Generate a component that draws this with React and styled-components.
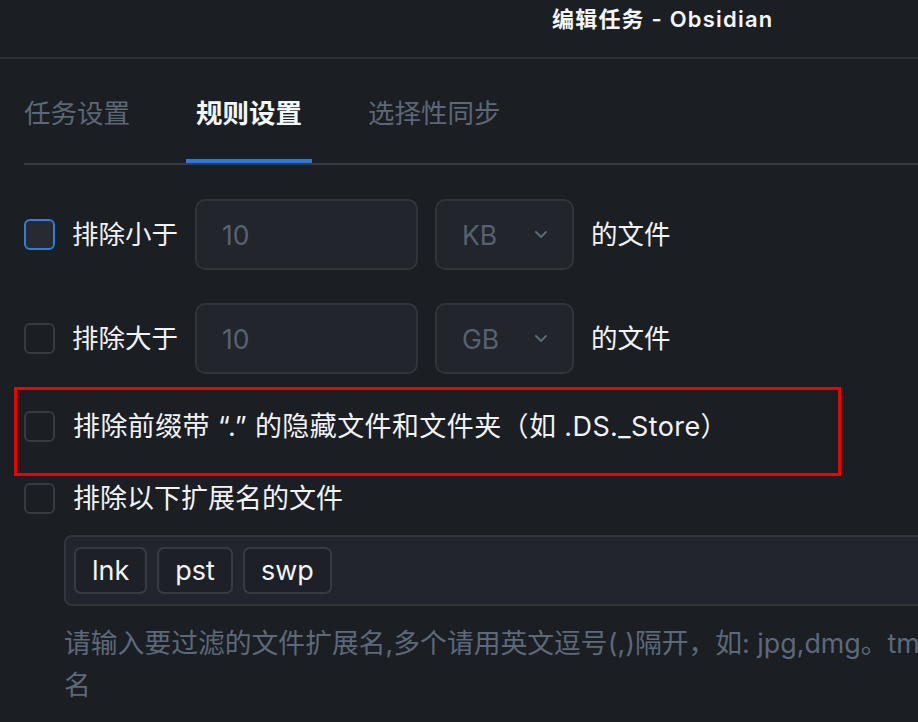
import styled, { createGlobalStyle } from 'styled-components';

const GlobalStyle = createGlobalStyle`
  html, body {
    margin: 0;
    padding: 0;
    background: #1b1e23;
    overflow: hidden;
  }
  body {
    font-family: Inter, "Noto Sans CJK SC", sans-serif;
    color: #f2f3f5;
  }
`;

const Window = styled.div`
  width: 918px;
  height: 722px;
  overflow: hidden;
  background: #1b1e23;
`;

const TitleBar = styled.div`
  height: 57px;
  border-bottom: 2px solid #2c3036;
  display: flex;
  align-items: flex-start;
  padding-left: 552px;
`;

const Title = styled.div`
  margin-top: 4px;
  font-size: 22px;
  font-weight: 600;
  letter-spacing: 1.2px;
  line-height: 30px;
  color: #f5f6f7;
  white-space: nowrap;
`;

const TabBar = styled.div`
  margin-left: 24px;
  height: 104px;
  border-bottom: 2px solid #363b42;
  display: flex;
  gap: 46px;
`;

const Tab = styled.div`
  position: relative;
  display: flex;
  align-items: center;
  padding: 0 10px;
  font-size: 26.5px;
  font-weight: ${(p) => (p.$active ? 600 : 400)};
  color: ${(p) => (p.$active ? '#f5f6f7' : '#5c6778')};
  &:first-child {
    margin-left: -10px;
  }
  &::after {
    content: '';
    display: ${(p) => (p.$active ? 'block' : 'none')};
    position: absolute;
    left: 0;
    right: 0;
    bottom: 0;
    height: 4px;
    background: #2a78de;
  }
`;

const Content = styled.div`
  padding: 34px 0 0 24px;
  display: flex;
  flex-direction: column;
  align-items: flex-start;
`;

const Row = styled.div`
  display: flex;
  align-items: center;
  gap: ${(p) => p.$gap || 18}px;
  height: ${(p) => p.$h || 71}px;
  margin-top: ${(p) => p.$mt || 0}px;
  white-space: nowrap;
`;

const Highlight = styled.div`
  box-sizing: border-box;
  margin: 13px 0 0 -10px;
  width: 827px;
  height: 89px;
  border: 3px solid #f00000;
  padding: 21px 0 0 7px;
  display: flex;
  align-items: flex-start;
  gap: 18px;
  white-space: nowrap;
`;

const Check = styled.span`
  box-sizing: border-box;
  flex: none;
  width: 31px;
  height: 31px;
  border-radius: 6px;
  border: 2px solid ${(p) => (p.$focus ? '#2f7ddc' : '#363a41')};
  background: ${(p) => (p.$focus ? '#272a30' : 'transparent')};
`;

const Label = styled.span`
  font-size: ${(p) => p.$fs || 27}px;
  line-height: 31px;
  color: #f2f3f5;
  letter-spacing: ${(p) => p.$ls || 0}px;
`;

const Field = styled.div`
  box-sizing: border-box;
  height: 71px;
  width: ${(p) => p.$w}px;
  border: 2px solid #30343b;
  border-radius: 10px;
  background: #22252c;
  display: flex;
  align-items: center;
  justify-content: space-between;
  padding: 0 24px 0 25px;
  font-size: 26.5px;
  color: #566173;
`;

const TagBox = styled.div`
  box-sizing: border-box;
  margin: 21px 0 0 40px;
  width: 1000px;
  height: 71px;
  border: 2px solid #31353c;
  border-radius: 8px;
  background: #22252d;
  display: flex;
  align-items: center;
  gap: 10px;
  padding: 0 8px;
`;

const Tag = styled.span`
  box-sizing: border-box;
  height: 47px;
  display: flex;
  align-items: center;
  padding: 0 16px;
  border: 2px solid #363a41;
  border-radius: 7px;
  background: #1d2026;
  font-size: 27px;
  color: #f2f3f5;
`;

const Hint = styled.div`
  margin: 16px 0 0 40px;
  font-size: 26.8px;
  line-height: 42px;
  color: #5d697b;
  white-space: nowrap;
`;

const Chevron = () => (
  <svg width="14" height="9" viewBox="0 0 14 9" fill="none">
    <path d="M2 2l5 5 5-5" stroke="#5d6878" strokeWidth="2" strokeLinecap="round" strokeLinejoin="round" />
  </svg>
);

const SizeRow = ({ focus, label, unit, mt }) => (
  <Row $mt={mt} $gap={17}>
    <Check $focus={focus} />
    <Label $fs={26.5}>{label}</Label>
    <Field $w={223}>10</Field>
    <Field $w={139}>
      {unit}
      <Chevron />
    </Field>
    <Label $fs={26.5}>的文件</Label>
  </Row>
);

export default function App() {
  return (
    <>
      <GlobalStyle />
      <Window>
        <TitleBar>
          <Title>编辑任务 - Obsidian</Title>
        </TitleBar>
        <TabBar>
          <Tab>任务设置</Tab>
          <Tab $active>规则设置</Tab>
          <Tab>选择性同步</Tab>
        </TabBar>
        <Content>
          <SizeRow focus label="排除小于" unit="KB" />
          <SizeRow label="排除大于" unit="GB" mt={33} />
          <Highlight>
            <Check />
            <Label $ls={0.4}>排除前缀带 “.” 的隐藏文件和文件夹（如 .DS._Store）</Label>
          </Highlight>
          <Row $h={32} $mt={6}>
            <Check />
            <Label>排除以下扩展名的文件</Label>
          </Row>
          <TagBox>
            <Tag>lnk</Tag>
            <Tag>pst</Tag>
            <Tag>swp</Tag>
          </TagBox>
          <Hint>
            请输入要过滤的文件扩展名,多个请用英文逗号(,)隔开，如: jpg,dmg。tm
            <br />
            名
          </Hint>
        </Content>
      </Window>
    </>
  );
}
